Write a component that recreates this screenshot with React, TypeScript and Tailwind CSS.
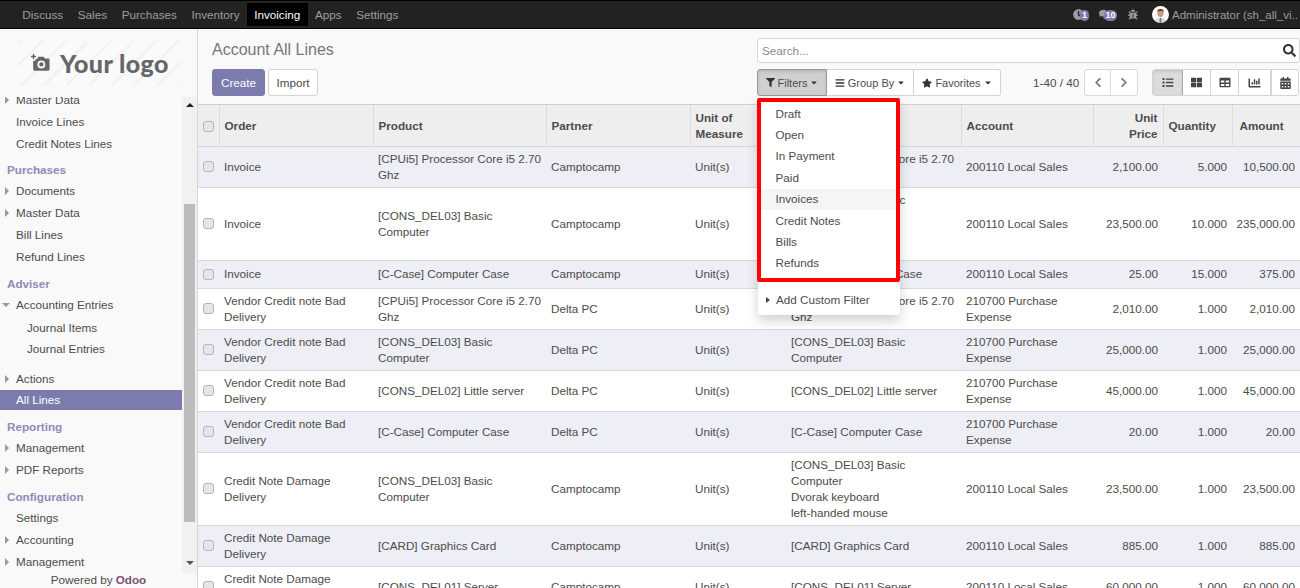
import {
  FaBars,
  FaBug,
  FaCalendarAlt,
  FaCaretDown,
  FaChartBar,
  FaChevronLeft,
  FaChevronRight,
  FaClock,
  FaComments,
  FaFilter,
  FaList,
  FaSearch,
  FaStar,
  FaTable,
  FaThLarge,
} from "react-icons/fa";

const menus = ["Discuss", "Sales", "Purchases", "Inventory", "Invoicing", "Apps", "Settings"];

type SideItem = { label: string; kind: "head" | "item" | "arrow" | "open" | "sub" | "active"; h: string };

const sideItems: SideItem[] = [
  { label: "Master Data", kind: "arrow", h: "h-[22px]" },
  { label: "Invoice Lines", kind: "item", h: "h-[22px]" },
  { label: "Credit Notes Lines", kind: "item", h: "h-[22px]" },
  { label: "Purchases", kind: "head", h: "h-[25px] pt-[5px]" },
  { label: "Documents", kind: "arrow", h: "h-[22px]" },
  { label: "Master Data", kind: "arrow", h: "h-[22px]" },
  { label: "Bill Lines", kind: "item", h: "h-[22px]" },
  { label: "Refund Lines", kind: "item", h: "h-[22px]" },
  { label: "Adviser", kind: "head", h: "h-[26px] pt-[6px]" },
  { label: "Accounting Entries", kind: "open", h: "h-[22px]" },
  { label: "Journal Items", kind: "sub", h: "h-[22px] mt-[1px]" },
  { label: "Journal Entries", kind: "sub", h: "h-[21px] pb-[1px]" },
  { label: "Actions", kind: "arrow", h: "h-[22px] mt-[8px]" },
  { label: "All Lines", kind: "active", h: "h-[20px]" },
  { label: "Reporting", kind: "head", h: "h-[27px] pt-[7px]" },
  { label: "Management", kind: "arrow", h: "h-[22px]" },
  { label: "PDF Reports", kind: "arrow", h: "h-[22px]" },
  { label: "Configuration", kind: "head", h: "h-[26px] pt-[6px]" },
  { label: "Settings", kind: "item", h: "h-[22px]" },
  { label: "Accounting", kind: "arrow", h: "h-[22px]" },
  { label: "Management", kind: "arrow", h: "h-[22px]" },
];

const filterItems = ["Draft", "Open", "In Payment", "Paid", "Invoices", "Credit Notes", "Bills", "Refunds"];

const rows = [
  ["Invoice", "[CPUi5] Processor Core i5 2.70 Ghz", "Camptocamp", "[CPUi5] Processor Core i5 2.70 Ghz", "200110 Local Sales", "2,100.00", "5.000", "10,500.00"],
  ["Invoice", "[CONS_DEL03] Basic Computer", "Camptocamp", "[CONS_DEL03] Basic\nComputer\nDvorak keyboard\nleft-handed mouse", "200110 Local Sales", "23,500.00", "10.000", "235,000.00"],
  ["Invoice", "[C-Case] Computer Case", "Camptocamp", "[C-Case] Computer Case", "200110 Local Sales", "25.00", "15.000", "375.00"],
  ["Vendor Credit note Bad Delivery", "[CPUi5] Processor Core i5 2.70 Ghz", "Delta PC", "[CPUi5] Processor Core i5 2.70 Ghz", "210700 Purchase Expense", "2,010.00", "1.000", "2,010.00"],
  ["Vendor Credit note Bad Delivery", "[CONS_DEL03] Basic Computer", "Delta PC", "[CONS_DEL03] Basic\nComputer", "210700 Purchase Expense", "25,000.00", "1.000", "25,000.00"],
  ["Vendor Credit note Bad Delivery", "[CONS_DEL02] Little server", "Delta PC", "[CONS_DEL02] Little server", "210700 Purchase Expense", "45,000.00", "1.000", "45,000.00"],
  ["Vendor Credit note Bad Delivery", "[C-Case] Computer Case", "Delta PC", "[C-Case] Computer Case", "210700 Purchase Expense", "20.00", "1.000", "20.00"],
  ["Credit Note Damage Delivery", "[CONS_DEL03] Basic Computer", "Camptocamp", "[CONS_DEL03] Basic\nComputer\nDvorak keyboard\nleft-handed mouse", "200110 Local Sales", "23,500.00", "1.000", "23,500.00"],
  ["Credit Note Damage Delivery", "[CARD] Graphics Card", "Camptocamp", "[CARD] Graphics Card", "200110 Local Sales", "885.00", "1.000", "885.00"],
  ["Credit Note Damage Delivery", "[CONS_DEL01] Server", "Camptocamp", "[CONS_DEL01] Server", "200110 Local Sales", "60,000.00", "1.000", "60,000.00"],
];

function Checkbox() {
  return <span className="block w-[11px] h-[11px] rounded-[3px] border border-[#b4b4b4] bg-[#e6e6e6] mx-auto" />;
}

function Arrow({ open }: { open?: boolean }) {
  if (open) {
    return <span className="w-0 h-0 border-x-[4px] border-x-transparent border-t-[4px] border-t-[#999] ml-[2px] mr-[6px]" />;
  }
  return <span className="w-0 h-0 border-y-[4px] border-y-transparent border-l-[4px] border-l-[#999] ml-[5px] mr-[7px]" />;
}

function Sidebar() {
  return (
    <aside className="w-[198px] shrink-0 h-full flex flex-col bg-[#f9f9f9] border-r border-[#d5d5d5]">
      <div className="h-[68px] shrink-0 flex items-center pl-[18px]">
        <div className="w-[162px] h-[44px] flex items-center pl-[12px] gap-[10px] bg-[repeating-linear-gradient(135deg,#f3f3f3_0,#f3f3f3_3px,#fafafa_3px,#fafafa_16px)]">
          <svg viewBox="0 0 22 20" className="w-[20px] h-[18px]" fill="#666">
            <path d="M1 2h2V0h1.6v2h2v1.6h-2v2H3v-2H1z" />
            <path fillRule="evenodd" d="M9 3h6l1.3 2H20a1.6 1.6 0 0 1 1.6 1.6V17a1.6 1.6 0 0 1-1.6 1.6H5A1.6 1.6 0 0 1 3.4 17V7.4H6V5.6h2zM12.5 7.2a4.4 4.4 0 1 0 0 8.8 4.4 4.4 0 0 0 0-8.8zm0 2a2.4 2.4 0 1 1 0 4.8 2.4 2.4 0 0 1 0-4.8z" />
          </svg>
          <span className="font-['Lato',sans-serif] font-black text-[25px] tracking-[0.4px] leading-none text-[#666]">Your logo</span>
        </div>
      </div>
      <div className="flex-1 min-h-0 flex">
        <div className="w-[182px] overflow-hidden">
          <ul className="-mt-[8px]">
            {sideItems.map((item, i) => (
              <li key={i} className={`flex items-center ${item.h} ${item.kind === "active" ? "bg-[#7c7bad] text-white" : ""}`}>
                {item.kind === "head" && <span className="pl-[7px] font-bold text-[#8f8bb8]">{item.label}</span>}
                {item.kind === "item" && <span className="pl-[16px]">{item.label}</span>}
                {item.kind === "active" && <span className="pl-[16px]">{item.label}</span>}
                {item.kind === "sub" && <span className="pl-[27px]">{item.label}</span>}
                {item.kind === "arrow" && (
                  <>
                    <Arrow />
                    {item.label}
                  </>
                )}
                {item.kind === "open" && (
                  <>
                    <Arrow open />
                    {item.label}
                  </>
                )}
              </li>
            ))}
          </ul>
        </div>
        <div className="w-[15px] flex flex-col items-center bg-[#f1f1f1] pt-[6px]">
          <span className="w-0 h-0 border-x-[4px] border-x-transparent border-b-[4px] border-b-[#222]" />
          <span className="w-[11px] h-[318px] bg-[#bcbcbc] mt-[97px]" />
          <span className="w-0 h-0 border-x-[4px] border-x-transparent border-t-[4px] border-t-[#555] mt-[39px]" />
        </div>
      </div>
      <div className="h-[15px] shrink-0 text-center leading-[14px]">
        Powered by <span className="font-bold text-[#7c4f6e]">Odoo</span>
      </div>
    </aside>
  );
}

function ControlPanel() {
  return (
    <div className="h-[76px] shrink-0 bg-[#f9f9f9] flex justify-between pl-[14px] border-b border-[#cfcfcf]">
      <div>
        <h1 className="text-[16px] leading-[18px] mt-[12px] text-[#777]">Account All Lines</h1>
        <div className="flex gap-[3px] mt-[10px]">
          <button className="h-[27px] w-[53px] rounded-[3px] bg-[#7c7bad] text-white border border-[#7c7bad]">Create</button>
          <button className="h-[27px] w-[50px] rounded-[3px] bg-white border border-[#d4d4d4]">Import</button>
        </div>
      </div>
      <div className="w-[543px] pt-[9px]">
        <div className="h-[25px] bg-white border border-[#d4d4d4] rounded-[3px] flex items-center justify-between pl-[4px] pr-[3px]">
          <span className="text-[#8a8a8a]">Search...</span>
          <FaSearch className="w-[13px] h-[13px] text-[#333]" />
        </div>
        <div className="flex items-center mt-[6px]">
          <div className="flex h-[27px] w-[244px] text-[11px]">
            <button className="w-[70px] flex items-center justify-center gap-[3px] bg-[#d0d0d0] border border-[#9a9a9a] rounded-l-[3px] shadow-[inset_0_2px_3px_rgba(0,0,0,0.12)]">
              <FaFilter className="w-[9px] h-[9px] text-[#333]" />
              Filters
              <FaCaretDown className="w-[8px] h-[9px] text-[#333]" />
            </button>
            <button className="w-[87px] flex items-center justify-center gap-[3px] bg-white border-y border-r border-[#d4d4d4]">
              <FaBars className="w-[10px] h-[10px] text-[#333]" />
              Group By
              <FaCaretDown className="w-[8px] h-[9px] text-[#333]" />
            </button>
            <button className="w-[87px] flex items-center justify-center gap-[3px] bg-white border-y border-r border-[#d4d4d4] rounded-r-[3px]">
              <FaStar className="w-[10px] h-[10px] text-[#333]" />
              Favorites
              <FaCaretDown className="w-[8px] h-[9px] text-[#333]" />
            </button>
          </div>
          <span className="ml-[32px] w-[51px]">1-40 / 40</span>
          <div className="flex h-[27px] w-[54px] border border-[#d9d9d9] rounded-[3px] bg-white">
            <span className="w-[26px] flex items-center justify-center border-r border-[#d9d9d9]">
              <FaChevronLeft className="w-[8px] h-[11px] text-[#777]" />
            </span>
            <span className="flex-1 flex items-center justify-center">
              <FaChevronRight className="w-[8px] h-[11px] text-[#777]" />
            </span>
          </div>
          <div className="flex h-[27px] ml-[14px] w-[147px] border border-[#d4d4d4] rounded-[3px] bg-white overflow-hidden text-[#444]">
            <span className="w-[30px] shrink-0 flex items-center justify-center bg-[#dcdcdc] border-r border-[#aaa] shadow-[inset_0_2px_3px_rgba(0,0,0,0.1)]">
              <FaList className="w-[12px] h-[11px]" />
            </span>
            <span className="w-[28px] shrink-0 flex items-center justify-center border-r border-[#d4d4d4]">
              <FaThLarge className="w-[11px] h-[11px]" />
            </span>
            <span className="w-[28px] shrink-0 flex items-center justify-center border-r border-[#d4d4d4]">
              <FaTable className="w-[12px] h-[11px]" />
            </span>
            <span className="w-[33px] shrink-0 flex items-center justify-center border-r-2 border-[#d4d4d4]">
              <FaChartBar className="w-[13px] h-[12px]" />
            </span>
            <span className="flex-1 flex items-center justify-center">
              <FaCalendarAlt className="w-[11px] h-[12px]" />
            </span>
          </div>
        </div>
      </div>
    </div>
  );
}

function FilterMenu() {
  return (
    <div className="absolute left-[560px] top-[69px] w-[142px] h-[217px] bg-white rounded-[3px] shadow-[0_6px_12px_rgba(0,0,0,0.18)]">
      <ul className="h-[184px] -ml-[1px] w-[143px] border-[4px] border-[#ff0000] rounded-[2px] pt-[1px]">
        {filterItems.map((f) => (
          <li key={f} className={`h-[21.4px] flex items-center pl-[14.5px] ${f === "Invoices" ? "bg-[#f5f5f5]" : ""}`}>
            {f}
          </li>
        ))}
      </ul>
      <div className="flex items-center mt-[10px] pl-[8px]">
        <span className="w-0 h-0 border-y-[3px] border-y-transparent border-l-[4px] border-l-[#444] mr-[6px]" />
        Add Custom Filter
      </div>
    </div>
  );
}

function LinesTable() {
  const th = "px-[5px] pt-[2px] pb-0 border-r border-[#dcdcdc] font-bold align-middle";
  const td = "pl-[5px] pr-[2px] py-[4px] align-middle whitespace-pre-line";
  const num = "px-[5px] py-[4px] align-middle text-right";
  return (
    <div className="flex-1 min-h-0 overflow-hidden">
      <table className="w-[1102px] table-fixed border-collapse">
        <colgroup>
          <col className="w-[21px]" />
          <col className="w-[154px]" />
          <col className="w-[173px]" />
          <col className="w-[144px]" />
          <col className="w-[96px]" />
          <col className="w-[175px]" />
          <col className="w-[132px]" />
          <col className="w-[70px]" />
          <col className="w-[69px]" />
          <col className="w-[68px]" />
        </colgroup>
        <thead>
          <tr className="h-[41px] bg-[#eeeeee] border-b border-[#d5d5d5]">
            <th className={th}>
              <Checkbox />
            </th>
            <th className={`${th} text-left`}>Order</th>
            <th className={`${th} text-left`}>Product</th>
            <th className={`${th} text-left`}>Partner</th>
            <th className={`${th} text-left`}>
              Unit of
              <br />
              Measure
            </th>
            <th className={`${th} text-left`}>Label</th>
            <th className={`${th} text-left`}>Account</th>
            <th className={`${th} text-right`}>
              Unit
              <br />
              Price
            </th>
            <th className={`${th} text-left`}>Quantity</th>
            <th className={`${th} text-left border-r-0 pl-[7px]`}>Amount</th>
          </tr>
        </thead>
        <tbody>
          {rows.map((r, i) => (
            <tr key={i} className={`h-[28px] border-b border-[#d9d9d9] ${i % 2 === 0 ? "bg-[#eeeef6]" : "bg-white"}`}>
              <td className="py-[4px] align-middle">
                <Checkbox />
              </td>
              <td className={td}>{r[0]}</td>
              <td className={td}>{r[1]}</td>
              <td className={td}>{r[2]}</td>
              <td className={td}>Unit(s)</td>
              <td className={td}>{r[3]}</td>
              <td className={td}>{r[4]}</td>
              <td className={num}>{r[5]}</td>
              <td className={num}>{r[6]}</td>
              <td className={`${num} pl-0`}>{r[7]}</td>
            </tr>
          ))}
        </tbody>
      </table>
    </div>
  );
}

export default function App() {
  return (
    <div className="h-screen w-full overflow-hidden flex flex-col bg-white font-['Liberation_Sans',Arial,sans-serif] text-[11.7px] leading-[16px] text-[#4c4c4c]">
      <nav className="h-[29px] shrink-0 bg-[#222222] border-y border-black flex items-center justify-between pl-[15px]">
        <div className="flex items-center">
          {menus.map((m) => (
            <span
              key={m}
              className={`h-[23px] flex items-center px-[7.3px] ${m === "Invoicing" ? "bg-black text-white" : "text-[#9d9d9d]"}`}
            >
              {m}
            </span>
          ))}
        </div>
        <div className="flex items-center text-[#9d9d9d]">
          <span className="relative w-[16px] h-[12px] flex items-center">
            <FaClock className="w-[11px] h-[11px]" />
            <span className="absolute left-[7px] top-[1px] h-[11px] w-[9px] rounded-full bg-[#7c7bad] text-white text-[9px] font-bold leading-[11px] text-center">1</span>
          </span>
          <span className="relative w-[18px] h-[12px] ml-[10px] flex items-center">
            <FaComments className="w-[12px] h-[11px]" />
            <span className="absolute left-[5px] top-[1px] h-[11px] w-[13px] rounded-full bg-[#7c7bad] text-white text-[9px] font-bold leading-[11px] text-center">10</span>
          </span>
          <FaBug className="w-[10px] h-[11px] ml-[11px]" />
          <svg viewBox="0 0 16 16" className="w-[17px] h-[17px] ml-[14px] rounded-full bg-white">
            <ellipse cx="8" cy="6.5" rx="3" ry="3.8" fill="#c99a7e" />
            <path d="M4.8 5.5c.2-3.5 6.2-3.5 6.4 0-1.2-1.2-5.2-1.2-6.4 0z" fill="#5b4636" />
            <path d="M2.5 16c.5-4 3-5 5.5-5s5 1 5.5 5z" fill="#d8d8d8" />
            <path d="M7.4 11h1.2l.4 5H7z" fill="#777" />
          </svg>
          <span className="ml-[3px] w-[128px] whitespace-nowrap overflow-hidden text-[11.5px]">Administrator (sh_all_vi..</span>
        </div>
      </nav>
      <div className="flex-1 min-h-0 flex">
        <Sidebar />
        <main className="flex-1 min-w-0 flex flex-col relative">
          <ControlPanel />
          <LinesTable />
          <FilterMenu />
        </main>
      </div>
    </div>
  );
}
